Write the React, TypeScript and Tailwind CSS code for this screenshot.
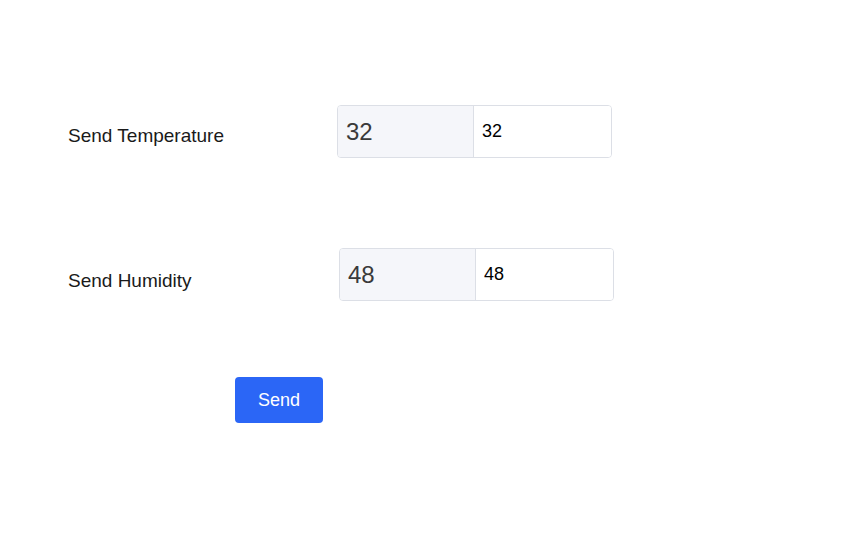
import React, { useState } from 'react';

function ValueRow({ label, value, labelClass }: { label: string; value: string; labelClass: string }) {
  const [v, setV] = useState(value);
  return (
    <div className="flex items-center">
      <div className={`${labelClass} text-[19px] text-[#1a1a1a]`}>{label}</div>
      <div className="flex h-[53px] w-[275px] rounded-[4px] border border-[#dcdfe6] overflow-hidden">
        <div className="w-[136px] bg-[#f5f6fa] border-r border-[#dcdfe6] flex items-center pl-[8px] text-[24px] text-[#3a3a3a]">
          {value}
        </div>
        <input
          value={v}
          onChange={(e) => setV(e.target.value)}
          className="flex-1 min-w-0 pl-[8px] text-[18px] text-black outline-none bg-white"
        />
      </div>
    </div>
  );
}

export default function App() {
  return (
    <div className="w-[862px] h-[556px] bg-white pl-[68px] pt-[105px]" style={{ fontFamily: '"Liberation Sans", "Noto Sans CJK SC", sans-serif' }}>
      <ValueRow label="Send Temperature" value="32" labelClass="w-[269px] pt-[10px]" />
      <div className="h-[90px]" />
      <ValueRow label="Send Humidity" value="48" labelClass="w-[271px] pt-[14px]" />
      <div className="h-[76px]" />
      <button className="ml-[167px] w-[88px] h-[46px] rounded-[4px] bg-[#2b66f6] text-white text-[18px]">
        Send
      </button>
    </div>
  );
}
